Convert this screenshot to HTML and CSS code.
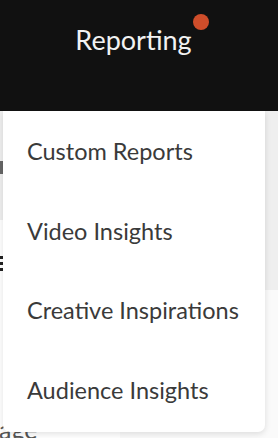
FILE: index.html
```html
<!DOCTYPE html>
<html>
<head>
<meta charset="utf-8">
<link rel="stylesheet" href="styles.css">
</head>
<body>
<header class="topbar">
  <span class="title">Reporting<span class="dot"></span></span>
</header>
<main class="content">
  <div class="bg-left">
    <div class="bg-card-left"><span class="frag-n"></span></div>
    <div class="frag-icon"><i></i><i></i><i></i></div>
    <div class="frag-page">age</div>
  </div>
  <div class="bg-right"></div>
  <nav class="dropdown">
    <a class="item">Custom Reports</a>
    <a class="item">Video Insights</a>
    <a class="item">Creative Inspirations</a>
    <a class="item">Audience Insights</a>
  </nav>
</main>
</body>
</html>
```
FILE: styles.css
```css
* { box-sizing: border-box; }
html, body { margin: 0; padding: 0; }
body {
  width: 278px;
  height: 438px;
  overflow: hidden;
  font-family: Lato, "Open Sans", sans-serif;
  background: #fafafa;
}
.topbar {
  height: 111px;
  background: #111111;
  display: flex;
  justify-content: center;
  padding-top: 24px;
}
.title {
  position: relative;
  color: #f2f2f2;
  font-size: 27px;
  line-height: 32px;
  height: 32px;
  padding-right: 11px;
}
.dot {
  position: absolute;
  left: calc(100% - 10px);
  top: -10px;
  width: 16px;
  height: 16px;
  border-radius: 50%;
  background: #cf4d2a;
}
.content {
  position: relative;
  display: flex;
  justify-content: space-between;
  height: 327px;
  overflow: hidden;
}
.bg-left {
  width: 120px;
  display: flex;
  flex-direction: column;
  background: #ffffff;
}
.bg-left > * { flex-shrink: 0; }
.bg-card-left {
  height: 109px;
  background: #efefef;
  padding-top: 50px;
}
.frag-n {
  display: block;
  width: 3px;
  height: 13px;
  background: #666;
}
.frag-icon {
  display: flex;
  flex-direction: column;
  gap: 3px;
  margin-top: 36px;
  width: 3px;
}
.frag-icon i {
  display: block;
  height: 3px;
  background: #222;
}
.frag-page {
  margin-top: 146px;
  margin-left: -1px;
  font-size: 25px;
  color: #555;
  line-height: 24px;
  white-space: nowrap;
}
.bg-right {
  width: 20px;
  height: 179px;
  background: #efefef;
}
.dropdown {
  position: absolute;
  left: 3px;
  top: 0;
  width: 262px;
  height: 321px;
  background: #ffffff;
  border-radius: 0 0 7px 7px;
  box-shadow: 0 2px 6px rgba(0,0,0,0.12);
  display: flex;
  flex-direction: column;
  padding-top: 25px;
}
.item {
  display: block;
  flex: 0 0 79.5px;
  padding-left: 24px;
  font-size: 23.5px;
  line-height: 30px;
  color: #3a3a3a;
}
```
